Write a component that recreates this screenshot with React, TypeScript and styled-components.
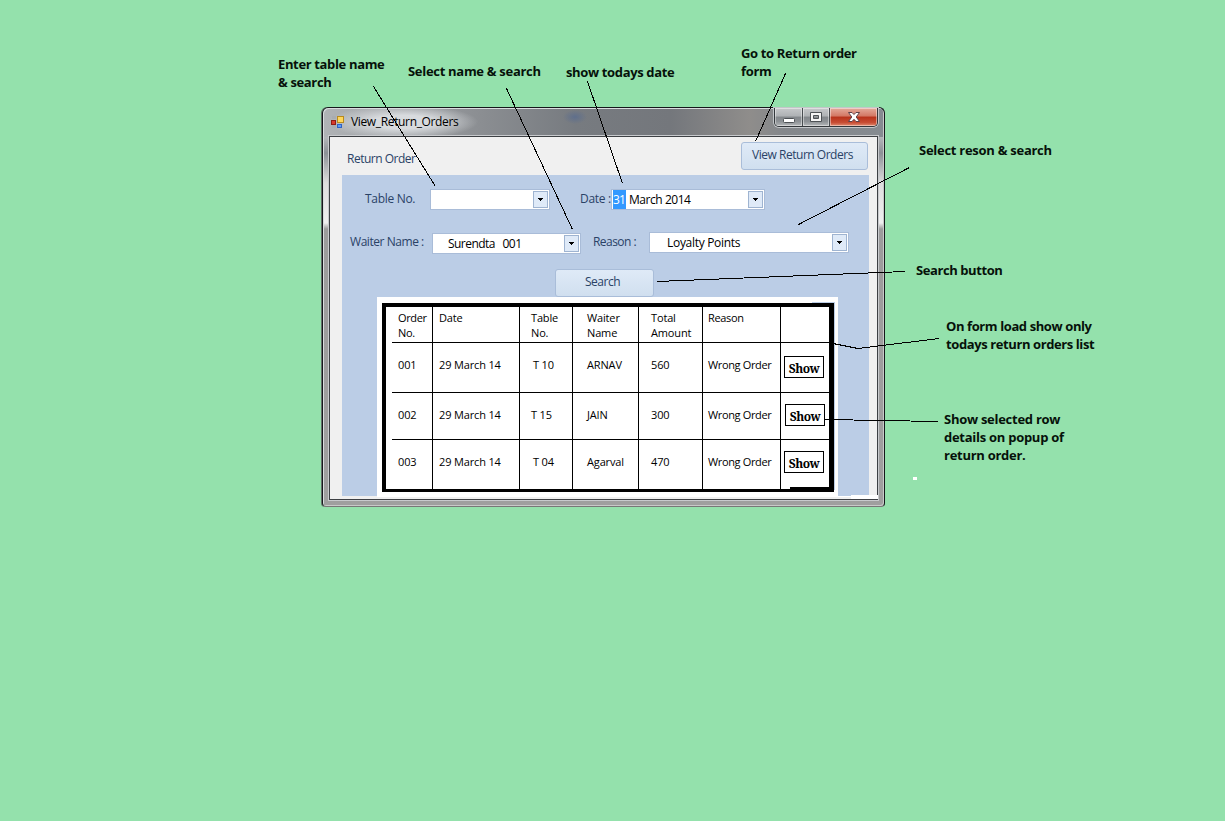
import React from "react";
import styled, { createGlobalStyle } from "styled-components";

const Global = createGlobalStyle`
  *{box-sizing:border-box}
  body{margin:0;background:#94e1ac;overflow:hidden}
`;

const Canvas = styled.main`
  position: relative;
  width: 1225px;
  height: 821px;
  background: #94e1ac;
  font-family: "Open Sans", sans-serif;
`;

const Note = styled.div<{ $x: number; $y: number; $ls?: number }>`
  position: absolute;
  left: ${(p) => p.$x}px;
  top: ${(p) => p.$y}px;
  font: 700 13px/18px "Open Sans", sans-serif;
  letter-spacing: ${(p) => p.$ls ?? -0.35}px;
  white-space: pre;
  color: #06110a;
`;

const Window = styled.section`
  position: absolute;
  left: 322px;
  top: 107px;
  width: 563px;
  height: 400px;
  padding: 0 6px 6px 6px;
  display: flex;
  flex-direction: column;
  border-radius: 6px 6px 4px 4px;
  border: 1px solid #15181b;
  border-bottom-color: #777;
  box-shadow: inset 1px 1px 0 #d9dcdf, inset -1px -1px 0 #c9c9c9, -1px 0 0 #66706c;
  background:
    radial-gradient(ellipse 75px 17px at 80px 14px, #d8dbde 40%, #d5d8db00),
    radial-gradient(ellipse 12px 7px at 252px 9px, #5f6f8c, #5f6f8c00),
    linear-gradient(90deg, #b0b3b6 0, #8b8e92 28%, #777b80 45%, #74777c 62%, #8f8d8b 76%, #84878b 82%, #858b91 100%) 0 0 / 100% 29px no-repeat,
    linear-gradient(#b4b7ba 29px, #8c9096 45px, #dedede 75px, #efefef 115px, #e0e0e0 116px, #9c9c9c 121px, #9f9f9f 100%);
`;

const TitleBar = styled.header`
  flex: none;
  height: 28px;
  display: flex;
  align-items: flex-start;
`;

const Title = styled.h1`
  margin: 5px 0 0 7px;
  flex: 1;
  font: 400 12px/18px "Open Sans", sans-serif;
  letter-spacing: -0.35px;
  color: #000;
`;

const AppIcon = styled.svg`
  margin: 7px 0 0 2px;
  width: 13px;
  height: 14px;
`;

const Controls = styled.div`
  display: flex;
  height: 19px;
  border: 1px solid #33373b;
  border-top: 0;
  border-radius: 0 0 5px 5px;
  overflow: hidden;
  box-shadow: 0 0 0 1px #c3c6c9;
`;

const Control = styled.button<{ $w: number; $close?: boolean }>`
  width: ${(p) => p.$w}px;
  padding: 0;
  border: 0;
  border-right: ${(p) => (p.$close ? "0" : "1px solid #484c50")};
  background: ${(p) =>
    p.$close
      ? "linear-gradient(#e4aa9b,#d37764 45%,#b8321b 50%,#c74c33 80%,#e18b70)"
      : "linear-gradient(#c6c8ca,#aeb1b4 45%,#83878b 50%,#8e9296 75%,#b4b7b9)"};
  box-shadow: inset 0 0 0 1px #ffffff70;
  display: flex;
  justify-content: center;
`;

const Client = styled.div`
  flex: 1;
  border: 1px solid #3d4044;
  outline: 1px solid #c8cacd;
  background: #f0f0f0;
  padding: 4px 8px 3px 12px;
  display: flex;
  flex-direction: column;
`;

const FormHead = styled.div`
  height: 34px;
  flex: none;
  display: flex;
  justify-content: space-between;
  padding: 1px 1px 0 5px;
`;

const Heading = styled.h2`
  margin: 8px 0 0;
  font: 400 12px/18px "Open Sans", sans-serif;
  letter-spacing: -0.5px;
  color: #2a4266;
`;

const Button = styled.button<{ $w: number }>`
  width: ${(p) => p.$w}px;
  height: 28px;
  padding: 0 4px 2px 0;
  border: 1px solid #a9bdd9;
  border-radius: 3px;
  background: linear-gradient(#dfeaf7, #d0dfef);
  font: 400 12px/18px "Open Sans", sans-serif;
  letter-spacing: -0.48px;
  white-space: nowrap;
  color: #2a4266;
`;

const Panel = styled.div`
  height: 321px;
  background: #bbcde6;
  display: flex;
  flex-direction: column;
`;

const FieldRow = styled.div<{ $top: number; $left: number }>`
  display: flex;
  align-items: flex-start;
  flex: none;
  margin: ${(p) => p.$top}px 0 0 ${(p) => p.$left}px;
`;

const Label = styled.label<{ $w: number; $ls?: number }>`
  width: ${(p) => p.$w}px;
  flex: none;
  font: 400 12px/19px "Open Sans", sans-serif;
  letter-spacing: ${(p) => p.$ls ?? -0.3}px;
  white-space: nowrap;
  color: #2a4266;
`;

const Combo = styled.div<{ $w: number; $pad?: number; $gap?: number; $ls?: number; $down?: number }>`
  width: ${(p) => p.$w}px;
  height: 21px;
  flex: none;
  margin: ${(p) => p.$down ?? 0}px ${(p) => p.$gap ?? 0}px 0 0;
  padding: 0 1px 0 ${(p) => p.$pad ?? 0}px;
  display: flex;
  align-items: center;
  justify-content: space-between;
  border: 1px solid #a9bcd8;
  background: #fff;
  font: 400 12px/19px "Open Sans", sans-serif;
  letter-spacing: ${(p) => p.$ls ?? -0.3}px;
  white-space: pre;
  color: #000;
`;

const Selected = styled.mark`
  display: inline-block;
  height: 19px;
  margin-right: 3px;
  width: 13px;
  letter-spacing: -0.8px;
  background: #3399ff;
  color: #fff;
`;

const Arrow = styled.span`
  width: 15px;
  height: 17px;
  border: 1px solid #9fb4d1;
  background: #dfeaf8;
  display: flex;
  align-items: center;
  justify-content: center;
`;

const Sheet = styled.div`
  width: 461px;
  height: 200px;
  flex: none;
  margin: 0 0 0 35px;
  padding: 6px 4px 6px 5px;
  background: #fff;
`;

const Frame = styled.div`
  height: 189px;
  border: 4px solid #000;
  border-width: 4px 5px 3px 4px;
  padding-left: 6px;
`;

const Table = styled.div`
  display: grid;
  grid-template-columns: 41px 87px 53px 66px 64px 78px 48px;
  grid-template-rows: 36px 50px 47px 49px;
`;

const Cell = styled.div<{ $head: boolean; $last: boolean; $bottom: boolean; $pad: number; $ls: number }>`
  border-right: ${(p) => (p.$last ? 0 : 1)}px solid #000;
  border-bottom: ${(p) => (p.$bottom ? 0 : 1)}px solid #000;
  padding: ${(p) => (p.$head ? 3 : 14)}px 0 0 ${(p) => p.$pad}px;
  font: 400 11px/15px "Open Sans", sans-serif;
  letter-spacing: ${(p) => p.$ls}px;
  white-space: pre;
  color: #000;
`;

const Show = styled.button<{ $first: boolean }>`
  width: 40px;
  height: 22px;
  display: block;
  margin-top: ${(p) => (p.$first ? -1 : -3)}px;
  padding: 2px 0 0;
  border: 1px solid #000;
  background: #fff;
  font: 700 12px/17px "Noto Serif", "DejaVu Serif", "Liberation Serif", serif;
  letter-spacing: -0.5px;
  color: #000;
`;

const Leaders = styled.svg`
  position: absolute;
  inset: 0;
  pointer-events: none;
`;

const Drop = () => (
  <Arrow>
    <svg width="5" height="3" shapeRendering="crispEdges">
      <path d="M0 0h5v1H0zM1 1h3v1H1zM2 2h1v1H2z" fill="#000" />
    </svg>
  </Arrow>
);

const rows = [
  ["Order\nNo.", "Date", "Table\nNo.", "Waiter\nName", "Total\nAmount", "Reason", ""],
  ["001", "29 March 14", "T 10", "ARNAV", "560", "Wrong Order", "Show"],
  ["002", "29 March 14", "T 15", "JAIN", "300", "Wrong Order", "Show"],
  ["003", "29 March 14", "T 04", "Agarval", "470", "Wrong Order", "Show"],
];
const pads = [6, 6, 11, 14, 12, 5, 3];

const cellPad = (r: number, c: number) =>
  pads[c] + (c === 2 && (r === 1 || r === 3) ? 2 : 0) + (c === 6 && r === 2 ? 1 : 0);

export default function App() {
  return (
    <Canvas>
      <Global />
      <Window>
        <TitleBar>
          <AppIcon viewBox="0 0 13 14">
            <path d="M1 1h4v3H1zM1 10h4v3H1z" fill="#a9acb0" />
            <rect x=".5" y="5.5" width="4" height="4" fill="#d8392b" stroke="#8e1d14" />
            <rect x="6.5" y="1.5" width="6" height="6" fill="#ffd65c" stroke="#b88a1d" />
            <rect x="6.5" y="9.5" width="4" height="3" fill="#5c9cf5" stroke="#2f62c4" />
          </AppIcon>
          <Title>View_Return_Orders</Title>
          <Controls>
            <Control $w={28} aria-label="Minimize">
              <svg width="14" height="19"><rect x="1.5" y="10.500" width="11" height="4" rx="1" fill="#fff" stroke="#4d5155" /></svg>
            </Control>
            <Control $w={27} aria-label="Maximize">
              <svg width="14" height="19">
                <path d="M1.500 4.500h11v9h-11zM4.500 7.500h5v3h-5z" fill="#f5f5f5" fillRule="evenodd" stroke="#4d5155" />
              </svg>
            </Control>
            <Control $w={47} $close aria-label="Close">
              <svg width="14" height="19">
                <path d="M1.500 4.500h3.500l2 2 2-2h3.500L9.200 9l3.300 4.500H9l-2-2.200-2 2.200H1.500L4.800 9z" fill="#fff" stroke="#5d4048" />
              </svg>
            </Control>
          </Controls>
        </TitleBar>
        <Client>
          <FormHead>
            <Heading>Return Order</Heading>
            <Button $w={127}>View Return Orders</Button>
          </FormHead>
          <Panel>
            <FieldRow $top={14} $left={23}>
              <Label $w={65}>Table No.</Label>
              <Combo $w={120} $gap={30}><span /><Drop /></Combo>
              <Label $w={31}>Date :</Label>
              <Combo $w={154} $pad={1} $ls={-0.45}>
                <span><Selected>31</Selected>March 2014</span><Drop />
              </Combo>
            </FieldRow>
            <FieldRow $top={22} $left={8}>
              <Label $w={82} $ls={-0.45}>Waiter Name :</Label>
              <Combo $w={149} $pad={15} $gap={12} $ls={-0.55} $down={1}><span>Surendta   001</span><Drop /></Combo>
              <Label $w={56} $ls={-0.55}>Reason :</Label>
              <Combo $w={200} $pad={17}><span>Loyalty Points</span><Drop /></Combo>
            </FieldRow>
            <FieldRow $top={15} $left={213}><Button $w={99}>Search</Button></FieldRow>
            <Sheet>
              <Frame>
                <Table>
                  {rows.map((row, r) =>
                    row.map((text, c) => (
                      <Cell
                        key={`${r}-${c}`}
                        $head={r === 0}
                        $last={c === 6}
                        $bottom={r === 3}
                        $pad={cellPad(r, c)}
                        $ls={c === 5 || text === rows[0][0] ? -0.35 : -0.15}
                      >
                        {text === "Show" ? <Show $first={r === 1}>Show</Show> : text}
                      </Cell>
                    ))
                  )}
                </Table>
              </Frame>
            </Sheet>
          </Panel>
        </Client>
      </Window>
      <Note $x={278} $y={55}>{"Enter table name\n& search"}</Note>
      <Note $x={408} $y={62} $ls={-0.3}>Select name & search</Note>
      <Note $x={566} $y={63}>show todays date</Note>
      <Note $x={741} $y={44}>{"Go to Return order\nform"}</Note>
      <Note $x={919} $y={141} $ls={-0.27}>Select reson & search</Note>
      <Note $x={916} $y={261} $ls={-0.42}>Search button</Note>
      <Note $x={946} $y={317} $ls={-0.4}>{"On form load show only\ntodays return orders list"}</Note>
      <Note $x={944} $y={410} $ls={-0.27}>{"Show selected row\ndetails on popup of\nreturn order."}</Note>
      <Leaders width="1225" height="821" fill="none" stroke="#000" shapeRendering="crispEdges">
        <path d="M812 302h22v1h-22zM834 302h1v188h-1z" fill="#bbcde6" stroke="none" />
        <path d="M373.500 86.500L435.500 186.500M506.500 88.500L572.500 229.500M587.500 81.500L622.500 183.500M785.500 73.500L755.500 141.500M909.500 167.500L798.500 224.500M657 281.500L905 271.500M833 343.500L858 348.500L939 338.500M825 419.500L938 421.500" />
        <path d="M913 477h4v3h-4zM823 496h28v-1h27v4h-27v-2h-28z" fill="#fff" stroke="none" />
        <path d="M790 487h42v3h-42z" fill="#000" stroke="none" />
      </Leaders>
    </Canvas>
  );
}
